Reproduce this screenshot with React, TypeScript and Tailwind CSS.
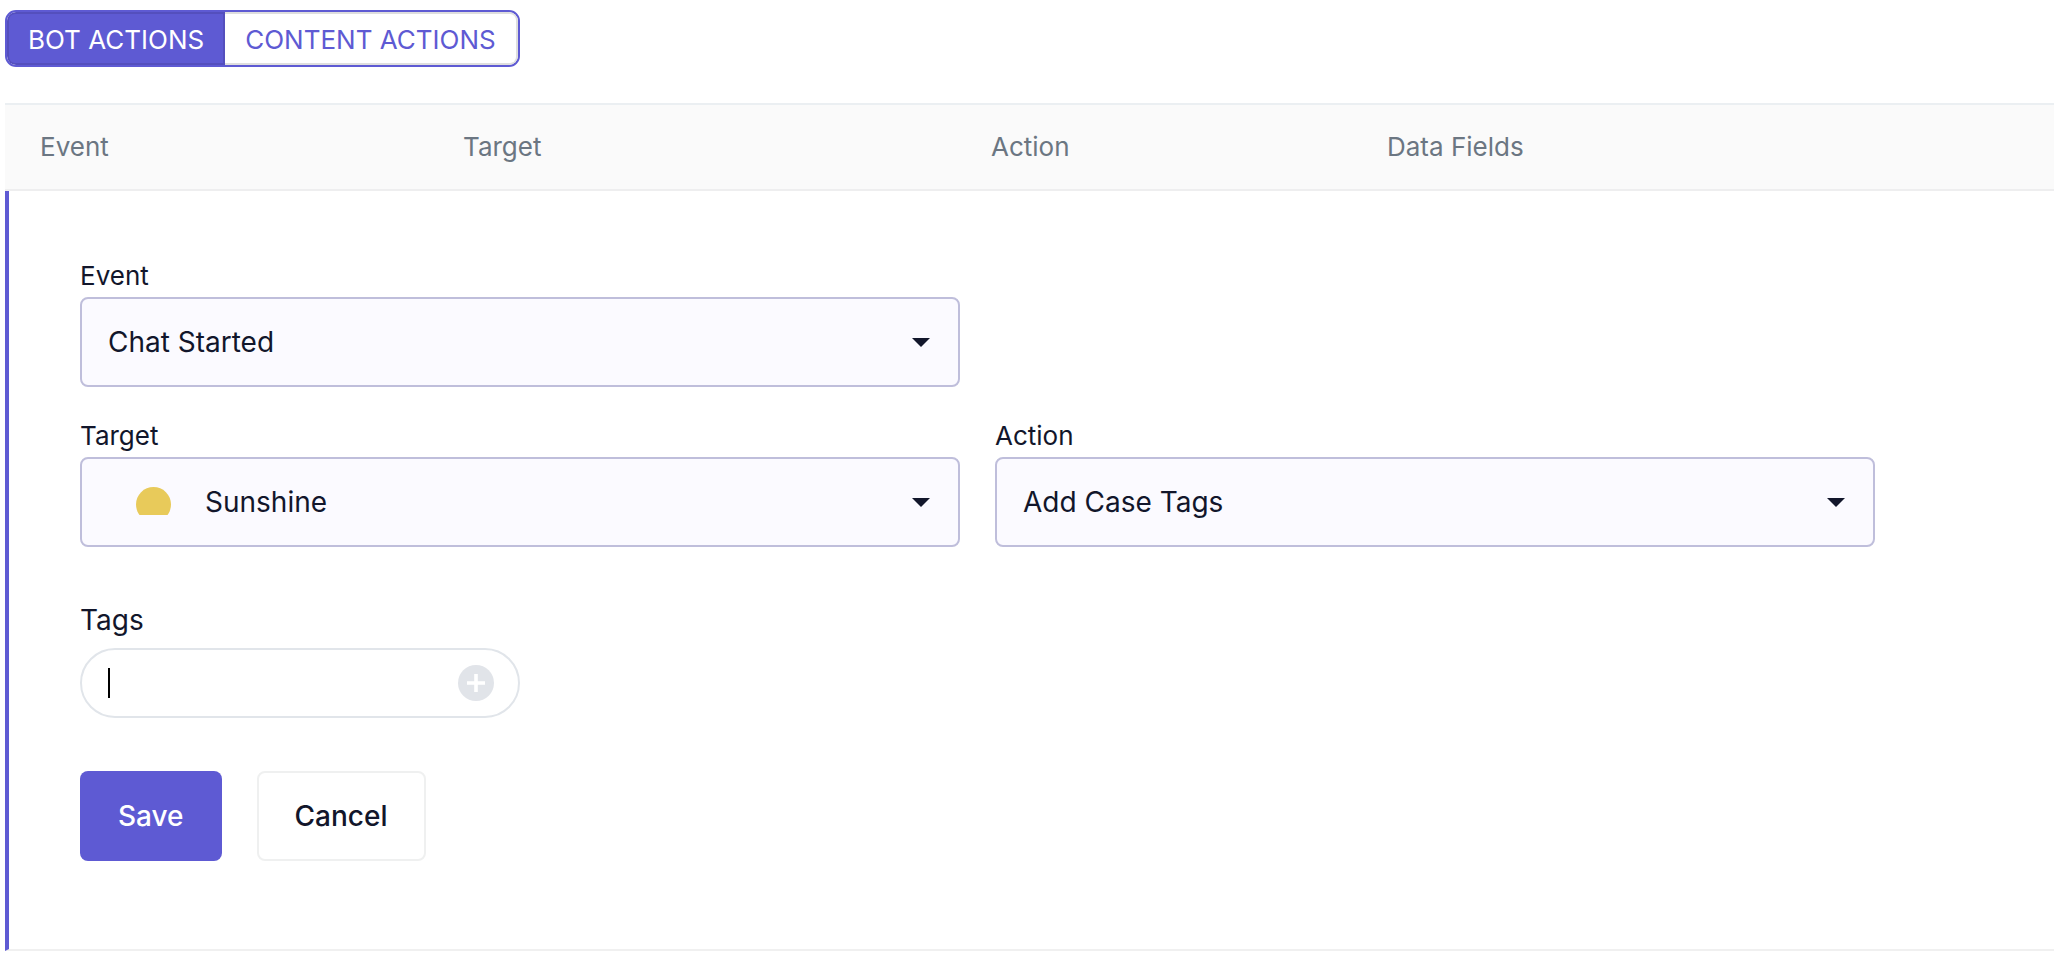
import { useState } from 'react'
import type { ReactNode } from 'react'

const TABS = ['BOT ACTIONS', 'CONTENT ACTIONS']

interface SelectFieldProps {
  id: string
  label: string
  options: string[]
  icon?: ReactNode
}

function SelectField({ id, label, options, icon }: SelectFieldProps) {
  return (
    <div>
      <label htmlFor={id} className="block pb-[3px] text-[26px] leading-[36px]">
        {label}
      </label>
      <div className="relative">
        {icon}
        <select
          id={id}
          className={`block h-[90px] w-full appearance-none rounded-lg border-2 border-[#bfbedb] bg-[#fbfaff] pr-16 text-[28px] outline-none ${icon ? 'pl-[123px]' : 'pl-[26px]'}`}
        >
          {options.map((option) => (
            <option key={option}>{option}</option>
          ))}
        </select>
        <svg
          className="pointer-events-none absolute top-[41px] right-[30px] h-[9px] w-[18px]"
          viewBox="0 0 18 9"
          fill="currentColor"
          aria-hidden="true"
        >
          <path d="M0 0h18L9 9z" />
        </svg>
      </div>
    </div>
  )
}

function SunIcon() {
  return (
    <svg
      className="pointer-events-none absolute top-[30px] left-[56px] h-7 w-[35px]"
      viewBox="0 0 35 28"
      aria-hidden="true"
    >
      <circle cx="17.5" cy="17.5" r="17.5" fill="#e8ca5a" />
    </svg>
  )
}

export default function App() {
  const [tab, setTab] = useState(TABS[0])
  const [tag, setTag] = useState('')
  const [focused, setFocused] = useState(true)

  return (
    <div className="bg-white pt-[10px] pl-[5px] font-['Inter',sans-serif] text-[#12162b]">
      <div className="inline-flex h-[57px] overflow-hidden rounded-[11px] border-2 border-[#5e5ad3] align-top text-[26px]">
        {TABS.map((name) => (
          <button
            key={name}
            type="button"
            onClick={() => setTab(name)}
            className={`border-y-2 pt-px whitespace-nowrap first:rounded-l-lg first:border-x-2 first:px-[19px] last:rounded-r-lg last:border-r-2 last:px-5 ${tab === name ? 'border-[#544fbd] bg-[#5e5ad3] text-white' : 'border-[#dedede] bg-white text-[#5e5ad3]'}`}
          >
            {name}
          </button>
        ))}
      </div>

      <table className="mt-9 w-full table-fixed border-separate border-spacing-0">
        <thead>
          <tr className="h-[88px] bg-[#fafafa] text-left text-[26px] text-[#6b7682] [&>th]:border-y-2 [&>th]:border-t-[#ebeff2] [&>th]:border-b-[#eeeeef] [&>th]:pb-[2px] [&>th]:pl-[35px] [&>th]:font-normal">
            <th className="w-[423px]">Event</th>
            <th className="w-[528px]">Target</th>
            <th className="w-[396px]">Action</th>
            <th>Data Fields</th>
          </tr>
        </thead>
        <tbody>
          <tr>
            <td
              colSpan={4}
              className="border-b-2 border-l-4 border-b-[#f0f0f0] border-l-[#5e5ad3] pt-[67px] pr-[179px] pb-[88px] pl-[71px]"
            >
              <form onSubmit={(e) => e.preventDefault()}>
                <div className="grid grid-cols-2 gap-x-[35px] gap-y-[31px]">
                  <SelectField id="event" label="Event" options={['Chat Started', 'Chat Ended']} />
                  <div />
                  <SelectField id="target" label="Target" options={['Sunshine']} icon={<SunIcon />} />
                  <SelectField id="action" label="Action" options={['Add Case Tags', 'Remove Case Tags']} />
                </div>

                <div className="mt-[54px] w-[440px] max-w-full">
                  <label htmlFor="tags" className="block pb-[9px] text-[28px] leading-[38px]">
                    Tags
                  </label>
                  <div className="flex h-[70px] items-center rounded-full border-2 border-[#e1e5ea] pr-6 pl-[26px]">
                    {focused && tag === '' && <span className="h-[30px] w-[2px] bg-black" />}
                    <input
                      id="tags"
                      type="text"
                      value={tag}
                      onChange={(e) => setTag(e.target.value)}
                      onFocus={() => setFocused(true)}
                      onBlur={() => setFocused(false)}
                      className="h-full min-w-0 flex-1 bg-transparent text-[28px] outline-none"
                    />
                    <button type="button" aria-label="Add tag" className="h-9 w-9 shrink-0">
                      <svg viewBox="0 0 36 36" className="h-9 w-9" aria-hidden="true">
                        <circle cx="18" cy="18" r="18" fill="#e1e4e9" />
                        <path d="M18 10.8v14.4M10.8 18h14.4" stroke="#fff" strokeWidth="3.6" strokeLinecap="square" />
                      </svg>
                    </button>
                  </div>
                </div>

                <div className="mt-[53px] flex gap-[35px] text-[28px] font-medium">
                  <button type="submit" className="h-[90px] rounded-lg bg-[#5e5ad3] px-[38px] text-white">
                    Save
                  </button>
                  <button type="button" className="h-[90px] rounded-lg border-2 border-[#eff0f0] bg-white px-9">
                    Cancel
                  </button>
                </div>
              </form>
            </td>
          </tr>
        </tbody>
      </table>
    </div>
  )
}
